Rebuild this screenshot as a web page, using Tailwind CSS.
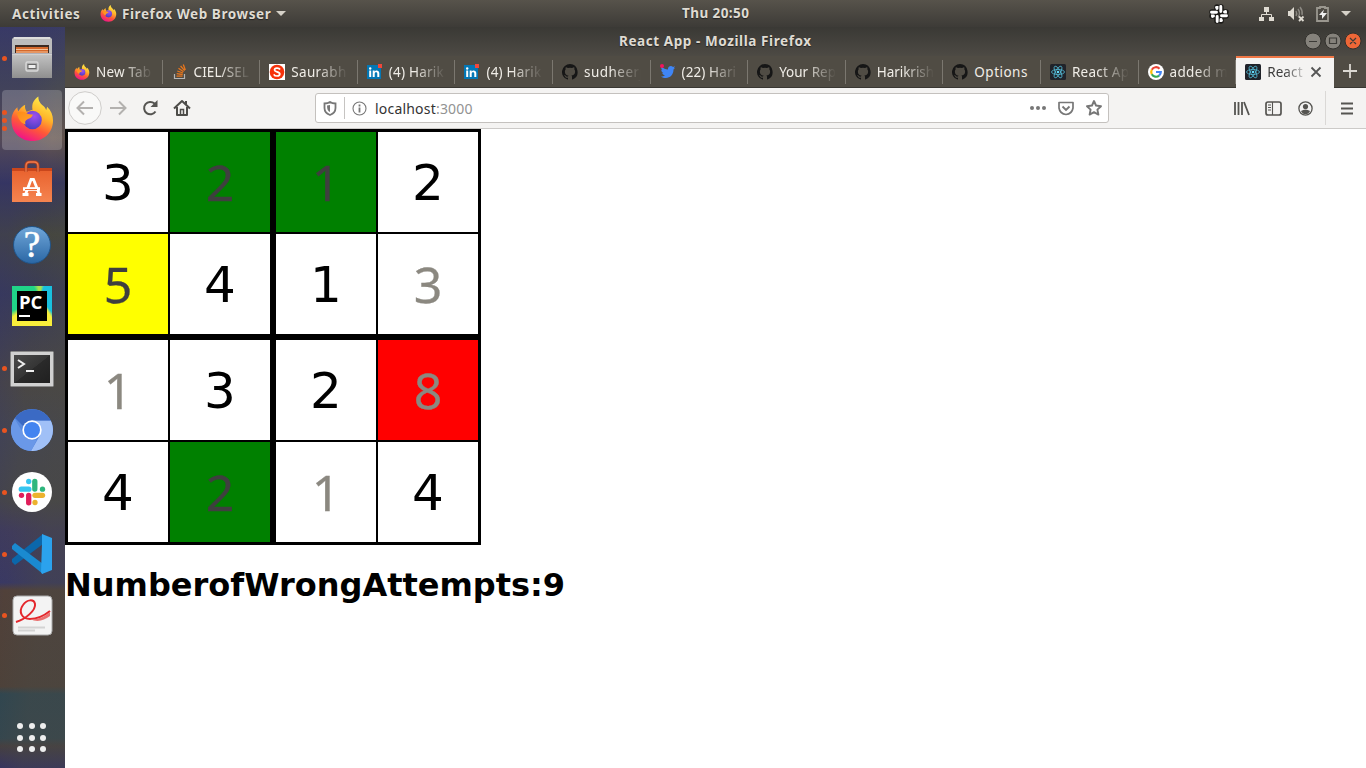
<!DOCTYPE html>
<html lang="en">
<head>
<meta charset="utf-8">
<title>React App</title>
<script src="https://cdn.jsdelivr.net/npm/@tailwindcss/browser@4"></script>
</head>
<body class="w-[1366px] h-[768px] overflow-hidden flex flex-col font-['Noto_Sans',sans-serif] bg-white">
<svg width="0" height="0" class="absolute">
<defs>
<linearGradient id="ffa" x1=".8" y1="0" x2=".35" y2="1"><stop offset="0" stop-color="#fff44f"/><stop offset=".4" stop-color="#ffb52a"/><stop offset=".68" stop-color="#ff5a36"/><stop offset="1" stop-color="#f0128a"/></linearGradient>
<radialGradient id="ffb" cx=".6" cy=".3" r=".7"><stop offset="0" stop-color="#a04ff0"/><stop offset="1" stop-color="#4b3fc4"/></radialGradient>
<linearGradient id="ffc" x1="0" y1="0" x2="1" y2="1"><stop offset="0" stop-color="#ff8a16"/><stop offset="1" stop-color="#ffa52e"/></linearGradient>
<linearGradient id="cab" x1="0" y1="0" x2="0" y2="1"><stop offset="0" stop-color="#c4c4c4"/><stop offset="1" stop-color="#8f8f8f"/></linearGradient>
<linearGradient id="bag" x1="0" y1="0" x2="0" y2="1"><stop offset="0" stop-color="#e8602c"/><stop offset="1" stop-color="#f58450"/></linearGradient>
<linearGradient id="trm" x1="0" y1="0" x2="1" y2="1"><stop offset="0" stop-color="#4a4a4a"/><stop offset=".5" stop-color="#353535"/><stop offset=".51" stop-color="#2a2a2a"/><stop offset="1" stop-color="#202020"/></linearGradient>
<symbol id="firefox" viewBox="0 0 44 46">
<path d="M22 45.500C9.500 45.500.5 36.500.5 24.500.5 18.500 3 14 6.500 11c0 2 .5 3 1 4C9.500 12 12 9.500 14.500 8.500c-.5 2.500 0 4.500 1.500 7l6-2c-1-6 1-10 6-13.500 0 5 2 7 5.500 10 1 1 2 2.500 2.500 4l1-3.500c4 3.500 6 9 6 14C43 36.500 34 45.500 22 45.500z" fill="url(#ffa)"/>
<circle cx="22" cy="24" r="9.500" fill="url(#ffb)"/>
<path d="M6 17c3-2 7-2 10 0 2 1 4 1.500 6.500 1.500-1 3-3 4-6 5-2 1-2.500 3-1.500 5-4-1-7-4-9-11.500z" fill="url(#ffc)"/>
</symbol>
<symbol id="github" viewBox="0 0 16 16"><path fill="#161616" d="M8 0a8 8 0 0 0-2.500 15.600c.4.100.500-.2.500-.4v-1.500c-2.200.5-2.700-1-2.700-1-.4-.9-.9-1.200-.9-1.200-.7-.5.1-.5.1-.5.800.1 1.200.8 1.200.8.7 1.200 1.900.9 2.300.7.1-.5.300-.9.500-1.100-1.800-.2-3.600-.9-3.600-4 0-.9.300-1.600.8-2.100-.1-.2-.4-1 .1-2.100 0 0 .7-.2 2.200.8a7.600 7.600 0 0 1 4 0c1.500-1 2.200-.8 2.200-.8.4 1.100.2 1.900.1 2.100.5.600.8 1.300.8 2.100 0 3.100-1.900 3.700-3.700 3.900.3.300.6.800.6 1.500v2.200c0 .2.100.5.600.4A8 8 0 0 0 8 0z"/></symbol>
<symbol id="linkedin" viewBox="0 0 16 16"><rect x="0" y="1" width="14" height="14" fill="#0377b5"/><circle cx="3.200" cy="4.500" r="1.200" fill="#fff"/><path d="M2.200 6.500h2V13h-2zM5.700 6.500h1.900v1c1-1.700 4.700-1.600 4.700 1.700V13h-2V9.700c0-2-2.600-1.900-2.600 0V13h-2z" fill="#fff"/><rect x="11" y="0" width="4" height="4" fill="#f2473b"/></symbol>
<symbol id="react" viewBox="0 0 16 16"><rect width="16" height="16" rx="1.500" fill="#20232a"/><g fill="none" stroke="#53b9d4" stroke-width=".8"><ellipse cx="8" cy="8" rx="6.500" ry="2.500"/><ellipse cx="8" cy="8" rx="6.500" ry="2.500" transform="rotate(60 8 8)"/><ellipse cx="8" cy="8" rx="6.500" ry="2.500" transform="rotate(120 8 8)"/></g><circle cx="8" cy="8" r="1.300" fill="#61dafb"/></symbol>
</defs>
</svg>

<header class="h-[27px] shrink-0 flex items-center bg-linear-to-b from-[#57534b] to-[#3d3b37] text-[#dfdbd2] text-[13.500px] font-bold [text-shadow:0_1px_1px_#222]">
  <span class="ml-3 w-[68px] mt-px whitespace-nowrap" data-w="68">Activities</span>
  <svg class="ml-5 size-[17px] shrink-0"><use href="#firefox"/></svg>
  <span class="ml-[5px] mt-px w-[149px] whitespace-nowrap" data-w="149">Firefox Web Browser</span>
  <svg class="ml-[5px] w-[10px] h-[6px] shrink-0" viewBox="0 0 10 6"><path d="M0 0h10L5 5z" fill="#d5d1c8"/></svg>
  <span class="ml-[396px] w-[67px] whitespace-nowrap" data-w="70">Thu 20:50</span>
  <svg class="ml-[460px] size-[20px] shrink-0" viewBox="0 0 20 20"><g stroke-linecap="round" fill="none" stroke="#1c1b19" stroke-width="5.500"><path d="M8 3v4.500M3 8h4.500M12 3v4.500M12.500 8H17M12.500 12H17M12 12.500V17M8 12.500V17M3 12h4.500"/></g><g stroke="#fff" stroke-width="2.900" stroke-linecap="round" fill="none"><path d="M11.800 2.500v5M2.500 8.200h5M12.500 11.800h5M8.200 12.500v5M7.500 3.500h.5v1M16.500 7.500v.5h-1M12.500 16.500h-.5v-1M3.500 12.500v-.5h1"/></g></svg>
  <svg class="ml-[29px] w-[17px] h-[16px] shrink-0" viewBox="0 0 17 16"><path d="M6 1h5v5H6zM1 11h5v4H1zM11 11h5v4h-5z" fill="#dfdbd2"/><path d="M8.500 6v3M3.500 11V8.500h10V11" stroke="#dfdbd2" fill="none"/></svg>
  <svg class="ml-[12px] w-[18px] h-[16px] shrink-0" viewBox="0 0 18 16"><path d="M1 5h2l4-4v13l-4-4H1z" fill="#dfdbd2"/><path d="M9 5q1.500 2.500 0 5M11 3q3 4.500 0 8M13 1q3 4 2 8" stroke="#8b8881" fill="none" stroke-width="1.400"/><path d="M12 10.500l4.500 4.500M16.500 10.500L12 15" stroke="#dfdbd2" stroke-width="1.800"/></svg>
  <svg class="ml-[11px] w-[13px] h-[16px] shrink-0" viewBox="0 0 13 16"><path d="M1 2h3V1h5v1h3v13H1z" fill="none" stroke="#9a978f" stroke-width="1.800"/><path d="M8 3.500L3 9h3v4l5-6H7z" fill="#eee"/></svg>
  <svg class="ml-[12px] w-[10px] h-[6px] shrink-0" viewBox="0 0 10 6"><path d="M0 0h10L5 5z" fill="#d5d1c8"/></svg>
</header>

<div class="flex flex-1 min-h-0">
<aside class="w-[65px] shrink-0 flex flex-col bg-[#414150]">
 <div class="flex flex-col flex-1 bg-[linear-gradient(96deg,#34346a55_0_20%,transparent_45%,#4a4a4566_70%),linear-gradient(180deg,#3a3c64_0%,#474953_8%,#65554f_15%,#36365f_21%,#45463f_28%,#393b58_36%,#4a4744_48%,#454650_55%,#474648_64%,#403c5b_68%,#3a3962_75%,#51413a_76%,#4d4139_89%,#2f4650_90%,#33464f_96%,#453f40_97%,#333064_100%)]">
  <div class="h-[62px] flex items-center"><i class="ml-[2px] size-[5px] rounded-full bg-[#e95420]"></i>
   <svg class="ml-[4px]" width="42" height="44" viewBox="0 0 42 44"><path d="M3 1h36l2 2v14H1V3z" fill="#bcbcbc"/><path d="M3 1h36v2H3z" fill="#ddd"/><path d="M4 9h34v8H4z" fill="#3c2a20"/><path d="M5 11h32v6H5z" fill="#d5692c"/><path d="M5 13h32v1H5zM5 15.500h32v1H5z" fill="#f5c39a"/><path d="M1 17.500h40V42H1z" fill="url(#cab)"/><path d="M1 17.500h40v1H1z" fill="#ddd"/><rect x="15" y="26" width="12" height="9" rx="1.500" fill="#aaa" stroke="#d8d8d8" stroke-width="1.500"/><rect x="17" y="28.500" width="8" height="4" fill="#eee" stroke="#666"/></svg></div>
  <div class="h-[62px] flex items-center pl-[2px]"><div class="w-[60px] h-[60px] rounded bg-white/20 flex items-center"><span class="flex flex-col gap-[3px]"><i class="size-[5px] rounded-full bg-[#e95420]"></i><i class="size-[5px] rounded-full bg-[#e95420]"></i><i class="size-[5px] rounded-full bg-[#e95420]"></i></span><svg class="ml-[4px] mb-[2px] w-[43px] h-[46px]"><use href="#firefox"/></svg></div></div>
  <div class="h-[62px] flex items-center justify-center pr-px"><svg width="42" height="44" viewBox="0 0 42 44"><path d="M1 8h40v34H1z" fill="url(#bag)"/><path d="M1 8h40v3H1z" fill="#c9461c"/><path d="M15 12V6q0-4 4-4h4q4 0 4 4v6" fill="none" stroke="#b3401c" stroke-width="3"/><path d="M15 12V6q0-4 4-4h4q4 0 4 4v6" fill="none" stroke="#ef7b4c" stroke-width="1.300"/><path d="M14.500 34.500L20 19.500h2.500l6 15M11.500 34.500h6M25 34.500h5.500" stroke="#fff" stroke-width="2.800" fill="none"/><path d="M12 29h17" stroke="#fff" stroke-width="3.600"/><path d="M14 29.500h12" stroke="#ee703c" stroke-width="1"/></svg></div>
  <div class="h-[62px] flex items-center justify-center pr-px pt-px"><div class="size-[38px] rounded-full bg-linear-to-b from-[#6fa6d8] to-[#2b68a6] border border-[#21568c] text-white font-['Liberation_Serif',serif] text-[37px] leading-[36px] text-center [-webkit-text-stroke:.6px_white]">?</div></div>
  <div class="h-[62px] flex items-center justify-center pr-px"><div class="size-[40px] bg-[conic-gradient(from_20deg_at_70%_30%,#19c0df_0_120deg,#f8ee3b_130deg_215deg,#20d488_225deg_310deg,#a5e04e_330deg_345deg,#19c0df)] p-[5px]"><div class="size-[30px] bg-black text-white font-['Open_Sans',sans-serif] font-bold text-[18.500px] leading-[21px] pl-[2px]">PC<div class="w-[11px] h-[2px] bg-white mt-[3px]"></div></div></div></div>
  <div class="h-[62px] flex items-center pt-[2px]"><i class="ml-[2px] mb-[2px] size-[5px] rounded-full bg-[#e95420]"></i>
   <svg class="ml-[3px]" width="44" height="37" viewBox="0 0 44 37"><rect x=".5" y=".5" width="43" height="35" rx="1" fill="#d1d1d1" stroke="#888"/><rect x="4" y="4" width="36" height="28" fill="url(#trm)"/><path d="M8 9l6 4-6 4" stroke="#eee" stroke-width="2" fill="none"/><path d="M16 20h8" stroke="#eee" stroke-width="2"/></svg></div>
  <div class="h-[62px] flex items-center"><i class="ml-[2px] size-[5px] rounded-full bg-[#e95420]"></i>
   <svg class="ml-[4px]" width="42" height="42" viewBox="0 0 42 42"><circle cx="21" cy="21" r="21" fill="#5889de"/><path d="M21 11.500h18.700A21 21 0 0 1 20 42l9.200-16z" fill="#a0c0f7"/><path d="M4 9A21 21 0 0 1 39.700 11.500H21L12 17z" fill="#3b6ac4"/><path d="M3.500 9.500l9.500 16q5 8 13 5L20 42A21 21 0 0 1 3.500 9.500z" fill="#6a98e8"/><circle cx="21" cy="21" r="9.700" fill="#fff"/><circle cx="21" cy="21" r="8" fill="#4384f0"/></svg></div>
  <div class="h-[62px] flex items-center"><i class="ml-[2px] size-[5px] rounded-full bg-[#e95420]"></i>
   <svg class="ml-[5px]" width="40" height="40" viewBox="0 0 40 40"><circle cx="20" cy="20" r="20" fill="#fff"/><g fill="none" stroke-width="5.300" stroke-linecap="round"><path d="M9.300 17.200h7.500" stroke="#36c5f0"/><path d="M16.700 9.500h.01" stroke="#36c5f0"/><path d="M22.800 9.500v7.500" stroke="#2eb67d"/><path d="M30.500 17.200h.01" stroke="#2eb67d"/><path d="M23 23.300h7.500" stroke="#ecb22e"/><path d="M23 30.500h.01" stroke="#ecb22e"/><path d="M16.700 23.300v7.500" stroke="#e01e5a"/><path d="M9.500 23.300h.01" stroke="#e01e5a"/></g></svg></div>
  <div class="h-[62px] flex items-center"><i class="ml-[2px] size-[5px] rounded-full bg-[#e95420]"></i>
   <svg class="ml-[5px]" width="40" height="40" viewBox="0 0 40 40"><path d="M0 28l3 3L31 10V0L0 25z" fill="#0b67ab"/><path d="M0 12l3-3 28 21v10L0 15z" fill="#1a8ad0"/><path d="M30 0l10 4v32l-10 4-1-2 1-28z" fill="#2ba2ed"/></svg></div>
  <div class="h-[62px] flex items-center pb-px"><i class="ml-[2px] size-[5px] rounded-full bg-[#e95420]"></i>
   <svg class="ml-[5px]" width="41" height="42" viewBox="0 0 41 42"><rect x="1" y="1" width="39" height="39" rx="4" fill="#f3f3f3" stroke="#aaa"/><path d="M4 27C14 24 24 15 23 9c-1-5-8-5-12 1-5 7-1 14 7 14 9 0 15-4 20-8" fill="none" stroke="#e4272c" stroke-width="2"/><path d="M18 24c9 1 15-3 20-7v4c-6 4-12 7-20 3z" fill="#e97170"/><path d="M6 32.500h27M6 35.500h17" stroke="#d3d3d3" stroke-width="2"/></svg></div>
  <div class="mt-auto mb-[16px] ml-[17px] grid grid-cols-[repeat(3,6px)] gap-[5.500px]">
   <i class="size-[6px] rounded-full bg-[#eee]"></i><i class="size-[6px] rounded-full bg-[#eee]"></i><i class="size-[6px] rounded-full bg-[#eee]"></i><i class="size-[6px] rounded-full bg-[#eee]"></i><i class="size-[6px] rounded-full bg-[#eee]"></i><i class="size-[6px] rounded-full bg-[#eee]"></i><i class="size-[6px] rounded-full bg-[#eee]"></i><i class="size-[6px] rounded-full bg-[#eee]"></i><i class="size-[6px] rounded-full bg-[#eee]"></i>
  </div>
 </div>
</aside>

<section class="flex-1 min-w-0 flex flex-col">
 <div class="h-[29px] shrink-0 flex items-center bg-linear-to-b from-[#3a3935] to-[#4d4a44] text-[#dfdbd2] text-[13.500px] font-bold">
  <span class="ml-[554px] w-[192px] whitespace-nowrap [text-shadow:0_1px_1px_#222]" data-w="197">React App - Mozilla Firefox</span>
  <svg class="ml-[493px] mb-[2px]" width="58" height="18" viewBox="0 0 58 18"><g stroke="#32312d"><circle cx="9" cy="9" r="8" fill="#85827b"/><circle cx="29" cy="9" r="8" fill="#85827b"/><circle cx="49" cy="9" r="8" fill="#ee6737"/></g><path d="M5 9.500h8M25.500 6h7v5.500h-7zM46 6l6 6M52 6l-6 6" stroke="#3c3b37" stroke-width="1.200" fill="none"/></svg>
 </div>
 <div id="tabs" class="h-[32px] shrink-0 flex bg-[#504c44] text-[#f0ede7] text-[13.500px] border-b border-[#393732]"></div>
 <div class="h-[41px] shrink-0 flex items-center bg-[#f4f3f2] border-b border-[#cccac8]">
  <svg class="ml-[3px]" width="34" height="34" viewBox="0 0 34 34"><circle cx="17" cy="17" r="16.300" fill="#f9f9f8" stroke="#ceccca"/><path d="M25 17H10M16 10.500L9.500 17l6.500 6.500" fill="none" stroke="#b3b1af" stroke-width="2"/></svg>
  <svg class="ml-[8px]" width="17" height="16" viewBox="0 0 17 16"><path d="M0 8h15M9 1.500L15.500 8 9 14.500" fill="none" stroke="#b3b1af" stroke-width="2"/></svg>
  <svg class="ml-[14px]" width="18" height="18" viewBox="0 0 18 18"><path d="M14.500 12.500A6.200 6.200 0 1 1 13.500 4.500L15 6.500" fill="none" stroke="#555451" stroke-width="2"/><path d="M16.500 1v7h-7z" fill="#555451"/></svg>
  <svg class="ml-[14px]" width="18" height="18" viewBox="0 0 18 18"><path d="M1 9.500L9 2l8 7.500M4 8v8h10V8M13 5V2" fill="none" stroke="#4d4c49" stroke-width="2" stroke-linejoin="round"/><path d="M7.500 15.500v-5h3v5" fill="none" stroke="#4d4c49" stroke-width="1.500"/></svg>
  <div class="ml-[124px] w-[794px] h-[30px] rounded-[3px] border border-[#c4c1be] bg-white flex items-center">
   <svg class="ml-[7px]" width="14" height="15" viewBox="0 0 14 15"><path d="M1.500 2.500Q5 2.500 7 1q2 1.500 5.500 1.500V7q0 5-5.500 7Q1.500 12 1.500 7z" fill="none" stroke="#777" stroke-width="1.800"/><path d="M7 4v7q-3-1-3-6.500z" fill="#777"/></svg>
   <div class="ml-[7px] w-px h-[22px] bg-[#c6c4c2]"></div>
   <svg class="ml-[7px]" width="15" height="15" viewBox="0 0 15 15"><circle cx="7.500" cy="7.500" r="6.500" fill="none" stroke="#777" stroke-width="1.100"/><path d="M7.500 3.500v2M7.500 6.500v5" stroke="#777" stroke-width="1.800"/></svg>
   <span class="ml-[8px] mt-px w-[97px] text-[14px] whitespace-nowrap text-[#333] leading-[20px]" data-w="97">localhost<span class="text-[#929292]">:3000</span></span>
   <svg class="ml-auto mr-[12px]" width="16" height="6" viewBox="0 0 16 6"><g fill="#777"><circle cx="2" cy="3" r="2"/><circle cx="8" cy="3" r="2"/><circle cx="14" cy="3" r="2"/></g></svg>
   <svg class="mr-[12px]" width="16" height="15" viewBox="0 0 16 15"><path d="M1 1.500h14V7q-1 6-7 6.500Q2 13 1 7z" fill="none" stroke="#777" stroke-width="1.700" stroke-linejoin="round"/><path d="M4.500 5.500L8 9l3.500-3.500" fill="none" stroke="#777" stroke-width="1.900"/></svg>
   <svg class="mr-[6px]" width="16" height="16" viewBox="0 0 16 16"><path d="M8 1l2 4.500 5 .7-3.600 3.400 1 5L8 12.200l-4.400 2.400 1-5L1 6.200l5-.7z" fill="none" stroke="#777" stroke-width="1.900" stroke-linejoin="round"/></svg>
  </div>
  <svg class="ml-[125px]" width="16" height="15" viewBox="0 0 16 15"><path d="M1 1v13M4.500 1v13M8 1v13M10 1l5 13" stroke="#555451" stroke-width="1.800"/></svg>
  <svg class="ml-[15px]" width="17" height="15" viewBox="0 0 17 15"><rect x="1" y="1" width="15" height="13" rx="2" fill="none" stroke="#555451" stroke-width="1.700"/><path d="M7.500 1v13M3 4h3M3 6.500h3M3 9h3" stroke="#555451" stroke-width="1.100"/></svg>
  <svg class="ml-[16px]" width="15" height="15" viewBox="0 0 15 15"><circle cx="7.500" cy="7.500" r="6.600" fill="none" stroke="#555451" stroke-width="1.300"/><circle cx="7.500" cy="5.500" r="2.600" fill="#555451"/><path d="M3 10q4.500-3 9 0-1 3-4.500 3.300Q4 13 3 10z" fill="#555451"/></svg>
  <div class="ml-[12px] w-px h-[34px] bg-[#dad8d6]"></div>
  <svg class="ml-[15px]" width="12" height="13" viewBox="0 0 12 13"><path d="M0 1.500h12M0 6.500h12M0 11.500h12" stroke="#555451" stroke-width="2"/></svg>
 </div>

 <main class="flex-1 bg-white">
  <div class="grid grid-cols-[202px_202px] gap-[6px] bg-black border-[3px] border-black w-[416px] h-[416px] text-[50px] leading-[102px] text-center font-['DejaVu_Sans',sans-serif]">
   <div class="grid grid-cols-[100px_100px] grid-rows-[100px_100px] gap-[2px]"><div class="bg-white">3</div><div class="bg-[#008000] text-[#3f3f3f] leading-[100px] font-['Noto_Sans',sans-serif] [-webkit-text-stroke:.3px_#3f3f3f]">2</div><div class="bg-[#ff0] text-[#3f3f3f] leading-[100px] font-['Noto_Sans',sans-serif] [-webkit-text-stroke:.3px_#3f3f3f]">5</div><div class="bg-white">4</div></div>
   <div class="grid grid-cols-[100px_100px] grid-rows-[100px_100px] gap-[2px]"><div class="bg-[#008000] text-[#3f3f3f] leading-[100px] font-['Noto_Sans',sans-serif] [-webkit-text-stroke:.3px_#3f3f3f]">1</div><div class="bg-white">2</div><div class="bg-white">1</div><div class="bg-white text-[#8b8880] leading-[100px] font-['Noto_Sans',sans-serif] [-webkit-text-stroke:.3px_#8b8880]">3</div></div>
   <div class="grid grid-cols-[100px_100px] grid-rows-[100px_100px] gap-[2px]"><div class="bg-white text-[#8b8880] leading-[100px] font-['Noto_Sans',sans-serif] [-webkit-text-stroke:.3px_#8b8880]">1</div><div class="bg-white">3</div><div class="bg-white">4</div><div class="bg-[#008000] text-[#3f3f3f] leading-[100px] font-['Noto_Sans',sans-serif] [-webkit-text-stroke:.3px_#3f3f3f]">2</div></div>
   <div class="grid grid-cols-[100px_100px] grid-rows-[100px_100px] gap-[2px]"><div class="bg-white">2</div><div class="bg-[#f00] text-[#8b8880] leading-[100px] font-['Noto_Sans',sans-serif] [-webkit-text-stroke:.3px_#8b8880]">8</div><div class="bg-white text-[#8b8880] leading-[100px] font-['Noto_Sans',sans-serif] [-webkit-text-stroke:.3px_#8b8880]">1</div><div class="bg-white">4</div></div>
  </div>
  <h1 class="mt-[21px] font-['DejaVu_Sans',sans-serif] font-bold text-[32px] leading-[38px]">NumberofWrongAttempts:9</h1>
 </main>
</section>
</div>

<script>
const use = id => '<svg class="size-4 shrink-0"><use href="#' + id + '"/></svg>';
const icons = {
  firefox: use('firefox'), github: use('github'), linkedin: use('linkedin'), react: use('react'),
  so: '<svg class="size-4 shrink-0" viewBox="0 0 16 16"><path d="M2.500 10v4.500h10V10" fill="none" stroke="#b5b5b5" stroke-width="1.200"/><path d="M4.500 12.200h6M4.700 9.700l6 .8M5.300 7l5.700 2M6.500 4.300l5 3.400M8.600 2l4 4.700M11.300.5l2 5.500" stroke="#e8761c" stroke-width="1.300"/></svg>',
  s: '<svg class="size-4 shrink-0" viewBox="0 0 16 16"><rect width="16" height="16" fill="#fff"/><circle cx="8" cy="8" r="7.300" fill="#f7310a"/><path d="M11 5.500C10 3.500 5.500 3.500 5.500 6c0 2.300 5.300 1.500 5.300 4 0 2.700-5 2.500-6 .3" fill="none" stroke="#fff" stroke-width="1.700"/></svg>',
  twitter: '<svg class="size-4 shrink-0" viewBox="0 0 16 16"><path d="M15 4l-1.500 1.600C13.500 11 10 14 6 14c-2 0-3.500-.500-5-1.500 1.600 0 3-.3 4-1.200-1.500-.2-2.400-1-2.800-2.200h1.300C2 8.500 1.300 7.300 1.300 5.800l1.200.3C1 5 1 3.500 1.500 2.500 3.500 4.500 5.500 5.500 8 5.600 7.500 1.800 11.500 1 13 3l2-.7-1.200 1.900z" fill="#3f85f5"/><circle cx="2" cy="2" r="2" fill="#f5145b"/></svg>',
  google: '<svg class="size-4 shrink-0" viewBox="0 0 16 16"><circle cx="8" cy="8" r="8" fill="#fff"/><g fill="none" stroke-width="2.200"><path d="M11.500 4.700A4.800 4.800 0 0 0 3.800 5.700" stroke="#ea4335"/><path d="M3.800 5.700a4.800 4.800 0 0 0 0 4.600" stroke="#fbbc05"/><path d="M3.800 10.300a4.800 4.800 0 0 0 7.300 1.300" stroke="#34a853"/><path d="M11.100 11.600A4.800 4.800 0 0 0 12.800 8H8" stroke="#4285f4"/></g></svg>'
};
const tabs = [['firefox','New Tab',59],['so','CIEL/SEL',69],['s','Saurabh',55],['linkedin','(4) Harik',61],['linkedin','(4) Harik',61],['github','sudheerj',58],['twitter','(22) Hari',60],['github','Your Rep',61],['github','Harikrish',60],['github','Options',54],['react','React Ap',61],['google','added m',57]];
document.getElementById('tabs').innerHTML = tabs.map(([i, t, w]) =>
  '<div class="w-[97.600px] shrink-0 flex items-center pl-[9px] relative">' + icons[i] +
  '<span class="ml-[6px] mt-[2px] w-[57px] overflow-hidden whitespace-nowrap ' + (t === 'Options' ? '' : '[mask-image:linear-gradient(90deg,#000_45%,transparent_100%)]') + '"><span data-w="' + w + '">' + t + '</span></span><i class="absolute right-0 top-[4px] h-[24px] w-px bg-[#7b776f]"></i></div>').join('') +
  '<div class="w-[98px] h-[32px] -mb-px shrink-0 flex items-center pl-[9px] pb-[2px] bg-[#f4f3f2] border-t-2 border-[#f07746] text-[#3c3c3c]">' + icons.react +
  '<span class="ml-[6px] mt-px w-[38px] overflow-hidden whitespace-nowrap [mask-image:linear-gradient(90deg,#000_45%,transparent_110%)]"><span data-w="37">React</span></span><svg class="ml-[5px]" width="12" height="12" viewBox="0 0 12 12"><path d="M1.500 1.500l9 9M10.500 1.500l-9 9" stroke="#555" stroke-width="1.800"/></svg></div>' +
  '<svg class="ml-[8px] mt-[7px]" width="16" height="16" viewBox="0 0 16 16"><path d="M8 1v14M1 8h14" stroke="#dbd8d2" stroke-width="1.800"/></svg>';

// Spread the letters so that each label fills its intended width.
document.querySelectorAll('[data-w]').forEach(el => {
  const r = document.createRange();
  r.selectNodeContents(el);
  const n = el.textContent.length;
  el.style.letterSpacing = ((+el.dataset.w - r.getBoundingClientRect().width) / n) + 'px';
});
</script>
</body>
</html>
